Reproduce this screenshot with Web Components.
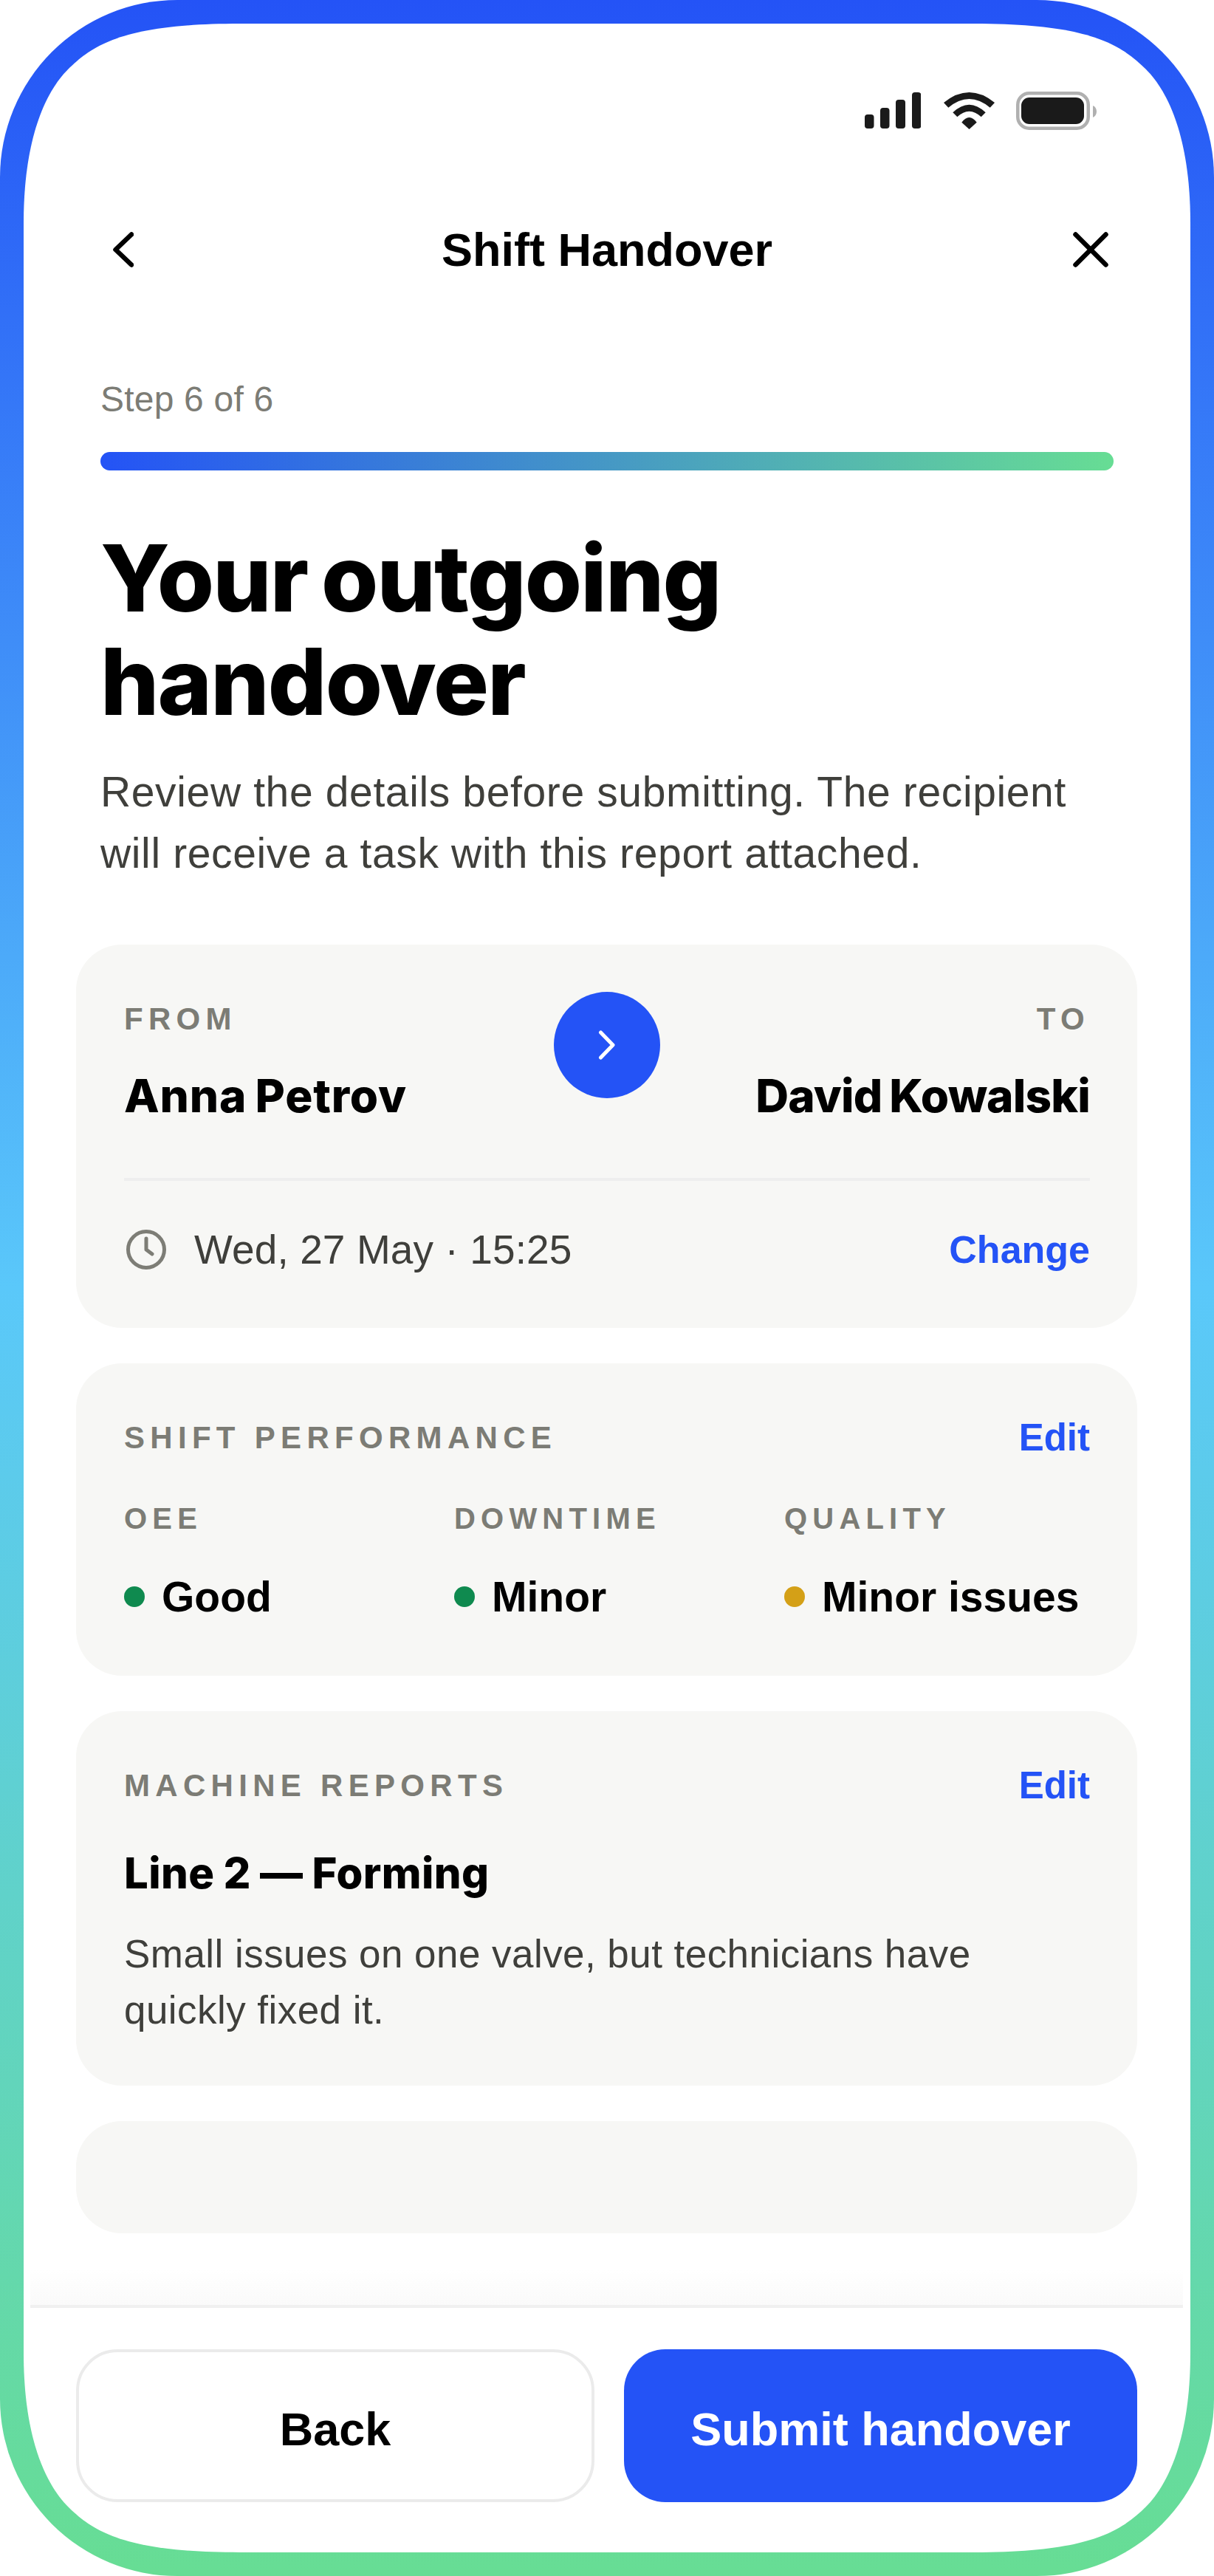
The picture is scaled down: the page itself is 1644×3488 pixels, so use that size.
<!DOCTYPE html>
<html lang="en">
<head>
<meta charset="utf-8">
<title>Shift Handover</title>
<style>
    html, body { margin: 0; padding: 0; background: #fff; }
</style>
</head>
<body>
<phone-frame>
    <status-bar></status-bar>
    <nav-bar>Shift Handover</nav-bar>
    <step-progress>Step 6 of 6</step-progress>
    <page-intro>
        <span slot="title">Your outgoing<br>handover</span>
        Review the details before submitting. The recipient<br>will receive a task with this report attached.
    </page-intro>
    <card-list>
        <party-card></party-card>
        <performance-card></performance-card>
        <report-card></report-card>
        <empty-card></empty-card>
    </card-list>
    <action-footer></action-footer>
</phone-frame>

<script>
const SANS = `"Liberation Sans", Arial, sans-serif`;
const DISPLAY = `Inter, "Liberation Sans", sans-serif`;

function component(name, html)
{
    const template = document.createElement('template');
    template.innerHTML = html;

    customElements.define(name, class extends HTMLElement
    {
        constructor()
        {
            super();
            this.attachShadow({ mode: 'open' });
            this.shadowRoot.append(template.content.cloneNode(true));
        }
    });
}

component('phone-frame', `
    <style>
        :host
        {
            display: block;
            box-sizing: border-box;
            width: 1644px;
            height: 3488px;
            padding: 32px;
            border-radius: 240px;
            background: linear-gradient(180deg, #2453f6 0%, #5ac8fa 50%, #67dd94 100%);
            font-family: ${SANS};
        }

        .screen
        {
            display: flex;
            flex-direction: column;
            height: 3424px;
            background: #fff;
            clip-path: path("M0 270 C0 140 38 84 60 62 C95 27 140 0 293 0 L1287 0 C1440 0 1485 27 1520 62 C1542 84 1580 140 1580 270 L1580 3154 C1580 3284 1542 3340 1520 3362 C1485 3397 1440 3424 1287 3424 L293 3424 C140 3424 95 3397 60 3362 C38 3340 0 3284 0 3154 Z");
        }
    </style>
    <div class="screen"><slot></slot></div>
`);

component('status-bar', `
    <style>
        :host
        {
            display: flex;
            justify-content: flex-end;
            align-items: center;
            height: 52px;
            margin-top: 92px;
            padding-right: 127px;
        }

        svg { display: block; fill: #1a1a1a; }
        .signal { margin-right: 31px; }
        .wifi { margin-right: 29px; }
    </style>
    <svg class="signal" width="76" height="50" viewBox="0 0 76 50">
        <rect x="0" y="30" width="12.5" height="19" rx="4"/>
        <rect x="21" y="21" width="12.5" height="28" rx="4"/>
        <rect x="42" y="10" width="13" height="39" rx="4"/>
        <rect x="64" y="0" width="12.5" height="49" rx="4"/>
    </svg>
    <svg class="wifi" width="69" height="50" viewBox="0 0 69 50">
        <path d="M0 14 Q34.5 -14 69 14 L62.7 20.7 Q34.5 -2.7 6.3 20.7 Z"/>
        <path d="M12.3 27.3 Q34.5 6.1 56.7 27.3 L50.7 33.3 Q34.5 18.1 18.3 33.3 Z"/>
        <path d="M24.3 40.7 Q34.5 27.3 44.7 40.7 L34.5 50 Z"/>
    </svg>
    <svg class="battery" width="109" height="52" viewBox="0 0 109 52">
        <rect x="2.25" y="2.25" width="95.5" height="47.5" rx="15.5" fill="none" stroke="#b0b0b0" stroke-width="4.5"/>
        <rect x="7" y="8" width="85" height="36" rx="11"/>
        <path d="M104 19 C107 20.5 109 23 109 27 C109 31 107 33.5 104 35 Z" fill="#b0b0b0"/>
    </svg>
`);

component('nav-bar', `
    <style>
        :host
        {
            display: grid;
            grid-template-columns: 1fr auto 1fr;
            align-items: center;
            height: 48px;
            margin-top: 138px;
            padding: 0 111px;
            color: #000;
        }

        h1
        {
            margin: 0;
            font: 700 63px/48px ${SANS};
        }

        svg { display: block; fill: none; stroke: #000; stroke-width: 6.5; stroke-linecap: round; stroke-linejoin: round; }
        .back { margin-left: 10px; }
        .close { justify-self: end; }
    </style>
    <svg class="back" width="28" height="48" viewBox="0 0 28 48"><path d="M25 3.5 L3.5 24 L25 44.5"/></svg>
    <h1><slot></slot></h1>
    <svg class="close" width="48" height="48" viewBox="0 0 48 48"><path d="M3.5 3.5 L44.5 44.5 M44.5 3.5 L3.5 44.5"/></svg>
`);

component('step-progress', `
    <style>
        :host
        {
            display: block;
            margin-top: 151px;
            padding: 0 104px;
            color: #7c7c75;
            font: 400 48px/56px ${SANS};
            letter-spacing: 0.2px;
        }

        .bar
        {
            height: 25px;
            margin-top: 43px;
            border-radius: 13px;
            background: linear-gradient(90deg, #2453f6, #67dd94);
        }
    </style>
    <div><slot></slot></div>
    <div class="bar"></div>
`);

component('page-intro', `
    <style>
        :host
        {
            display: block;
            margin-top: 76px;
            padding: 0 100px 0 104px;
            color: #3f3f3b;
            font: 400 57px/83px ${SANS};
            letter-spacing: 0.63px;
        }

        h2
        {
            margin: 0 0 38px;
            color: #000;
            font: 800 125px/140px ${DISPLAY};
            letter-spacing: -1.85px;
            word-spacing: -7px;
        }
    </style>
    <h2><slot name="title"></slot></h2>
    <slot></slot>
`);

component('card-list', `
    <style>
        :host
        {
            display: flex;
            flex-direction: column;
            gap: 48px;
            margin-top: 82px;
            padding: 0 72px 0 71px;
        }
    </style>
    <slot></slot>
`);

const cardCss = `
    :host
    {
        display: block;
        box-sizing: border-box;
        border-radius: 62px;
        background: #f7f7f5;
        padding: 0 64px 0 65px;
    }

    .label
    {
        color: #7c7c75;
        font: 700 42px/48px ${SANS};
        letter-spacing: 7.3px;
    }

    .link { color: #2453f6; font: 700 51px/60px ${SANS}; }

    .name
    {
        color: #000;
        font: 800 62px/72px ${DISPLAY};
        word-spacing: -3px;
    }

    .head { display: flex; justify-content: space-between; align-items: center; }
`;

component('party-card', `
    <style>
        ${cardCss}

        :host { height: 519px; padding-top: 64px; }

        .parties
        {
            display: grid;
            grid-template-columns: 1fr 144px 1fr;
            height: 252px;
            border-bottom: 4px solid #eeeeee;
        }

        .to { text-align: right; }
        .parties .label { margin-top: 13px; }
        .parties .name { margin-top: 44px; white-space: nowrap; }
        .from .name { letter-spacing: 0.8px; }
        .to .name { letter-spacing: -0.8px; }

        .arrow
        {
            display: flex;
            align-items: center;
            justify-content: center;
            width: 144px;
            height: 144px;
            border-radius: 50%;
            background: #2453f6;
        }

        .arrow svg { fill: none; stroke: #fff; stroke-width: 5; stroke-linecap: round; stroke-linejoin: round; }

        .when
        {
            display: flex;
            align-items: center;
            margin-top: 63px;
            height: 60px;
        }

        .when svg { margin: 0 38px 0 3px; flex: none; }
        .date { flex: 1; color: #3f3f3b; font: 400 55px/60px ${SANS}; letter-spacing: 0.1px; }
        .when .link { font-size: 52px; }
    </style>
    <div class="parties">
        <div class="from">
            <div class="label">FROM</div>
            <div class="name">Anna Petrov</div>
        </div>
        <div class="arrow"><svg width="26" height="40" viewBox="0 0 26 40"><path d="M4.5 3 L21 20 L4.5 37"/></svg></div>
        <div class="to">
            <div class="label">TO</div>
            <div class="name">David Kowalski</div>
        </div>
    </div>
    <div class="when">
        <svg width="54" height="54" viewBox="0 0 54 54" fill="none" stroke="#7d7d76" stroke-width="5" stroke-linecap="round" stroke-linejoin="round">
            <circle cx="27" cy="27" r="24.5"/>
            <path d="M27 12 V27 L35 33"/>
        </svg>
        <div class="date">Wed, 27 May · 15:25</div>
        <div class="link">Change</div>
    </div>
`);

component('status-metric', `
    <style>
        :host { display: block; }

        .label
        {
            color: #7c7c75;
            font: 700 40px/48px ${SANS};
            letter-spacing: 7.2px;
        }

        .value
        {
            display: flex;
            align-items: center;
            gap: 23px;
            margin-top: 50px;
            color: #000;
            font: 700 57px/64px ${SANS};
            white-space: nowrap;
        }

        i
        {
            flex: none;
            width: 28px;
            height: 28px;
            border-radius: 50%;
            background: var(--dot, #0f8a4f);
        }
    </style>
    <div class="label"><slot name="label"></slot></div>
    <div class="value"><i></i><slot></slot></div>
`);

component('performance-card', `
    <style>
        ${cardCss}

        :host { height: 423px; padding-top: 71px; }

        .metrics
        {
            display: grid;
            grid-template-columns: repeat(3, 1fr);
            gap: 33px;
            margin-top: 55px;
        }
    </style>
    <div class="head">
        <div class="label">SHIFT PERFORMANCE</div>
        <div class="link">Edit</div>
    </div>
    <div class="metrics">
        <status-metric><span slot="label">OEE</span>Good</status-metric>
        <status-metric><span slot="label">DOWNTIME</span>Minor</status-metric>
        <status-metric style="--dot: #d4a017"><span slot="label">QUALITY</span>Minor issues</status-metric>
    </div>
`);

component('report-card', `
    <style>
        ${cardCss}

        :host { height: 507px; padding-top: 71px; }

        .name { margin-top: 52px; font-size: 58px; letter-spacing: 0.4px; word-spacing: -1px; }

        p
        {
            margin: 36px 0 0;
            color: #3f3f3b;
            font: 400 53px/76px ${SANS};
            letter-spacing: 0.45px;
        }
    </style>
    <div class="head">
        <div class="label">MACHINE REPORTS</div>
        <div class="link">Edit</div>
    </div>
    <div class="name">Line 2 — Forming</div>
    <p>Small issues on one valve, but technicians have<br>quickly fixed it.</p>
`);

component('empty-card', `
    <style>
        ${cardCss}

        :host { height: 152px; }
    </style>
`);

component('action-footer', `
    <style>
        :host
        {
            position: relative;
            display: grid;
            grid-template-columns: 702fr 695fr;
            gap: 40px;
            margin: auto 10px 68px 9px;
            padding: 56px 62px 0;
            border-top: 4px solid #f0f0f0;
        }

        :host::before
        {
            content: "";
            position: absolute;
            left: 0;
            right: 0;
            top: -52px;
            height: 48px;
            background: linear-gradient(180deg, rgba(250, 250, 250, 0), #fafafa);
            pointer-events: none;
        }

        button
        {
            box-sizing: border-box;
            height: 207px;
            padding: 8px 0 0;
            border-radius: 56px;
            font: 700 63px/72px ${SANS};
        }

        .back { border: 4px solid #ebebeb; background: #fff; color: #000; }
        .submit { border: 0; background: #2453f6; color: #fff; }
    </style>
    <button class="back">Back</button>
    <button class="submit">Submit handover</button>
`);
</script>
</body>
</html>
